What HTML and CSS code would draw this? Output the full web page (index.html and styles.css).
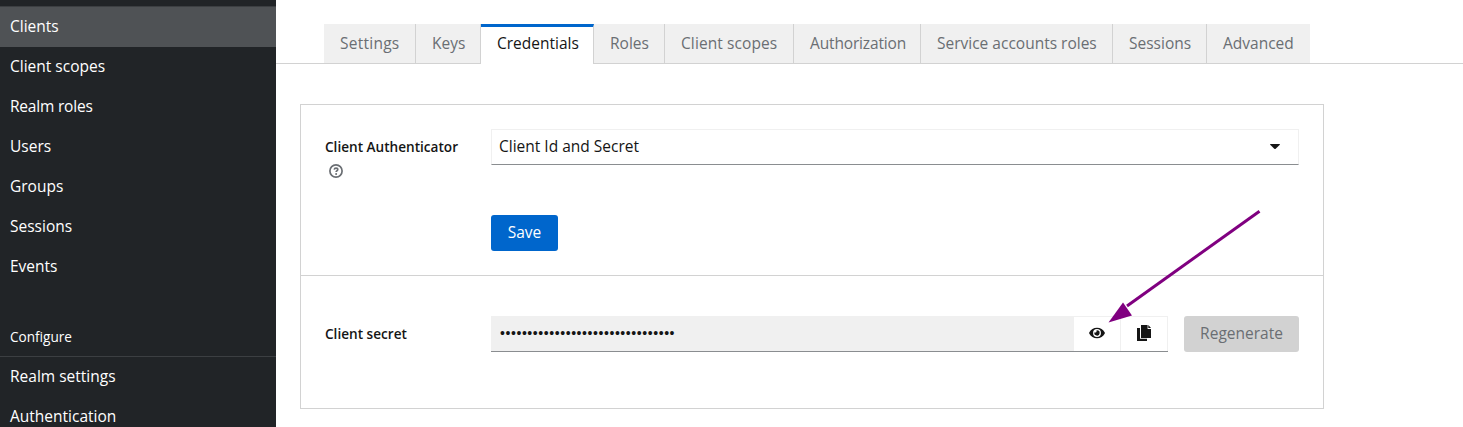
FILE: index.html
```
<!DOCTYPE html>
<html lang="en">
<head>
<meta charset="utf-8">
<title>Clients</title>
<link rel="stylesheet" href="styles.css">
</head>
<body>
<div class="page">
  <nav class="sidebar">
    <ul class="nav-list nav-manage">
      <li class="nav-item current">Clients</li>
      <li class="nav-item">Client scopes</li>
      <li class="nav-item tight">Realm roles</li>
      <li class="nav-item">Users</li>
      <li class="nav-item">Groups</li>
      <li class="nav-item">Sessions</li>
      <li class="nav-item">Events</li>
    </ul>
    <h2 class="nav-title">Configure</h2>
    <ul class="nav-list">
      <li class="nav-item">Realm settings</li>
      <li class="nav-item">Authentication</li>
    </ul>
  </nav>
  <main class="main">
    <div class="tabs">
      <div class="tab loose">Settings</div>
      <div class="tab">Keys</div>
      <div class="tab active">Credentials</div>
      <div class="tab">Roles</div>
      <div class="tab loose-sm">Client scopes</div>
      <div class="tab tight">Authorization</div>
      <div class="tab">Service accounts roles</div>
      <div class="tab">Sessions</div>
      <div class="tab">Advanced</div>
    </div>
    <div class="card">
      <section class="section auth">
        <div class="row">
          <div class="label">Client Authenticator
            <svg class="help" viewBox="0 0 14 14"><circle cx="7" cy="7" r="6.1" fill="none" stroke="#6a6e73" stroke-width="1.7"/><path d="M5.2 5.7C5.3 4.7 6 4.1 7 4.1s1.8.6 1.8 1.5C8.800 6.8 7.1 6.7 7.1 8.1" fill="none" stroke="#6a6e73" stroke-width="1.6"/><circle cx="7.1" cy="9.9" r="1" fill="#6a6e73"/></svg>
          </div>
          <div class="select"><span>Client Id and Secret</span><svg class="caret" viewBox="0 0 10 5"><path d="M.6 0h8.8c.6 0 .7.5.4.8L5.7 4.7q-.7.6-1.4 0L.2.8C-.1.5 0 0 .6 0z" fill="#151515"/></svg></div>
        </div>
        <button class="btn save">Save</button>
      </section>
      <section class="section secret">
        <div class="row">
          <div class="label">Client secret</div>
          <div class="group">
            <div class="password">••••••••••••••••••••••••••••••••</div>
            <button class="icon-btn"><svg class="eye" viewBox="0 0 576 512"><path fill="#151515" d="M572.52 241.4C518.29 135.59 410.93 64 288 64S57.68 135.64 3.48 241.41a32.35 32.35 0 0 0 0 29.19C57.71 376.41 165.07 448 288 448s230.32-71.64 284.52-177.41a32.35 32.35 0 0 0 0-29.19zM288 400a144 144 0 1 1 144-144 143.93 143.93 0 0 1-144 144zm0-240a95.31 95.31 0 0 0-25.31 3.79 47.85 47.85 0 0 1-66.9 66.9A95.78 95.78 0 1 0 288 160z"/></svg></button>
            <button class="icon-btn"><svg class="copy" viewBox="0 0 14 16"><path fill="#151515" d="M0 3h3v10.7h7V16H0zM4 0h6.6v3.9H14V13H4zM11.3 0 14 3.1h-2.7z"/></svg></button>
          </div>
          <button class="btn regenerate">Regenerate</button>
        </div>
      </section>
    </div>
  </main>
</div>
<svg class="arrow" viewBox="0 0 160 120"><path d="M154.500 4.200 22 99" fill="none" stroke="#800080" stroke-width="3"/><path d="M3.5 115.5 18 95.5 27 108.500z" fill="#800080"/></svg>
</body>
</html>
```
FILE: styles.css
```
* { box-sizing: border-box; }
body {
  margin: 0;
  overflow: hidden;
  background: #fff;
  color: #151515;
  font: 15.5px/24px "Open Sans", "Noto Sans", sans-serif;
}
button { margin: 0; padding: 0; border: 0; font: inherit; }
svg { display: block; }
.page { display: flex; height: 427px; overflow: hidden; }

.sidebar { width: 276px; flex: none; background: #212427; color: #fff; }
.nav-list { list-style: none; margin: 0; padding: 0; }
.nav-manage { padding-top: 6px; }
.nav-item { height: 40px; padding: 7px 10px; }
.nav-item.current { height: 41px; background: #4f5255; border-top: 1px solid #3c3f42; }
.nav-item.tight { letter-spacing: -.2px; }
.nav-title {
  height: 70px;
  margin: 0;
  padding: 39px 10px 0;
  border-bottom: 1px solid #3c3f42;
  font-size: 13.6px;
  font-weight: 400;
  line-height: 22px;
}

.main { flex: 1; padding-top: 24px; }
.tabs {
  display: grid;
  grid-template-columns: 92px 65px 113px 71px 129px 127px 192px 94px 103px;
  height: 40px;
  padding-left: 48px;
  border-bottom: 1px solid #d2d2d2;
}
.tab {
  height: 39px;
  padding: 7px 0 0 16px;
  border-right: 1px solid #d2d2d2;
  background: #f0f0f0;
  color: #6a6e73;
  white-space: nowrap;
}
.tab.loose { letter-spacing: .25px; }
.tab.loose-sm { letter-spacing: .1px; }
.tab.tight { letter-spacing: -.15px; }
.tab:last-child { border-right: 0; }
.tab.active {
  height: 40px;
  padding-top: 4px;
  background: #fff;
  border-top: 3px solid #06c;
  color: #151515;
}

.card { width: 1024px; height: 305px; margin: 40px 0 0 24px; border: 1px solid #d2d2d2; }
.section { padding: 24px; }
.auth { height: 171px; border-bottom: 1px solid #d2d2d2; }
.secret { padding-top: 40px; }
.row { display: flex; height: 36px; }
.label {
  width: 166px;
  flex: none;
  padding-top: 7px;
  font-size: 13.6px;
  font-weight: 600;
  line-height: 22px;
}
.help { width: 14px; height: 14px; margin: 6px 0 0 4px; }
.select {
  display: flex;
  flex: 1;
  align-items: center;
  justify-content: space-between;
  padding: 0 18px 2px 7px;
  border: 1px solid #f0f0f0;
  border-bottom-color: #8a8d90;
}
.caret { width: 10px; height: 5px; }
.btn { height: 36px; padding-bottom: 2px; border-radius: 3px; }
.save { width: 67px; margin: 50px 0 0 166px; background: #06c; color: #fff; }
.group { display: flex; width: 677px; border-bottom: 1px solid #8a8d90; }
.password {
  flex: 1;
  padding: 5px 0 0 9px;
  background: #f0f0f0;
  font: 14px/24px "Liberation Sans", sans-serif;
  letter-spacing: .57px;
}
.icon-btn {
  display: flex;
  width: 47px;
  align-items: center;
  justify-content: center;
  padding-bottom: 2px;
  border: solid #f0f0f0;
  border-width: 1px 1px 0 0;
  background: #fff;
}
.eye { width: 16px; height: 14px; }
.copy { width: 14px; height: 16px; }
.regenerate { width: 115px; margin-left: 16px; background: #d2d2d2; color: #6a6e73; }

.arrow { position: absolute; left: 1105px; top: 207px; width: 160px; height: 120px; }
```
